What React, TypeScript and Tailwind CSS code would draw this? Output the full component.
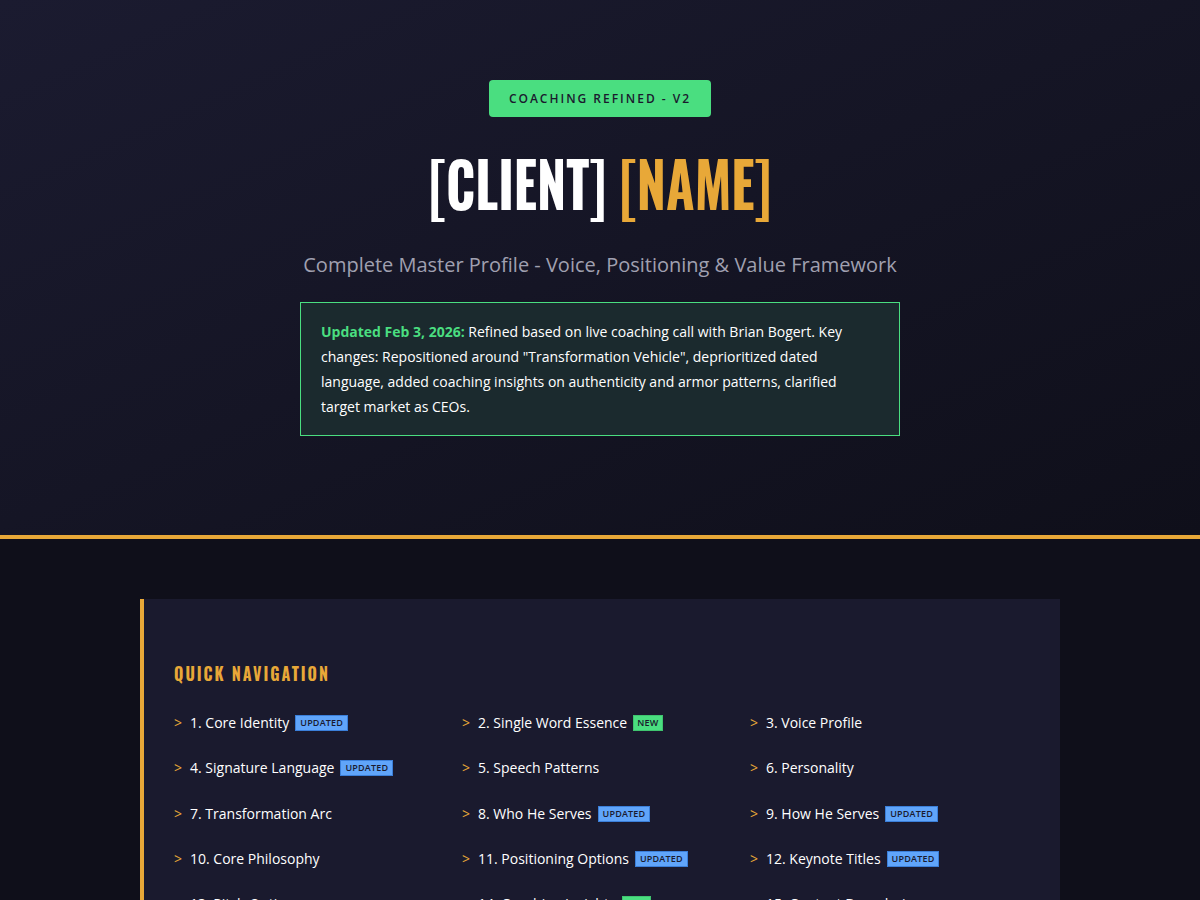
const navItems: { label: string; tag?: 'updated' | 'new' }[] = [
  { label: '1. Core Identity', tag: 'updated' },
  { label: '2. Single Word Essence', tag: 'new' },
  { label: '3. Voice Profile' },
  { label: '4. Signature Language', tag: 'updated' },
  { label: '5. Speech Patterns' },
  { label: '6. Personality' },
  { label: '7. Transformation Arc' },
  { label: '8. Who He Serves', tag: 'updated' },
  { label: '9. How He Serves', tag: 'updated' },
  { label: '10. Core Philosophy' },
  { label: '11. Positioning Options', tag: 'updated' },
  { label: '12. Keynote Titles', tag: 'updated' },
  { label: '13. Pitch Options' },
  { label: '14. Coaching Insights', tag: 'new' },
  { label: '15. Content Boundaries' },
];

const display = "font-['Oswald','Liberation_Sans_Narrow','DejaVu_Sans_Condensed',sans-serif]";

function Tag({ kind }: { kind: 'updated' | 'new' }) {
  if (kind === 'new') {
    return (
      <span className="ml-[6px] inline-block border border-[#3fc46f] bg-[#4ade80] px-[3px] text-[9px] font-semibold uppercase leading-[14px] tracking-[0.3px] text-[#1a1a2e]">
        New
      </span>
    );
  }
  return (
    <span className="ml-[6px] inline-block border border-[#3b7fd9] bg-[#60a5fa] px-[4px] text-[9px] font-semibold uppercase leading-[14px] tracking-[0.2px] text-[#1a1a2e]">
      Updated
    </span>
  );
}

export default function App() {
  return (
    <div className="min-h-[900px] bg-[#0f0f1a] font-['Open_Sans',sans-serif] text-[#e8e8e8]">
      <header className="flex flex-col items-center border-b-4 border-[#e8a838] bg-gradient-to-br from-[#1b1b30] to-[#0f0f1a] pb-[99px] pt-[80px]">
        <div className="rounded-[4px] bg-[#4ade80] px-5 py-[10px] text-[12px] font-semibold uppercase leading-[17px] tracking-[2px] text-[#1a1a2e]">
          Coaching Refined - V2
        </div>
        <h1 className={`${display} mt-[23px] text-[52px] font-bold leading-[84px] text-white`}>
          <span className="inline-block scale-y-[1.2]">
            [CLIENT] <span className="text-[#e8a838]">[NAME]</span>
          </span>
        </h1>
        <p className="mt-[26px] text-[20px] leading-[30px] text-[#a0a0b0]">
          Complete Master Profile - Voice, Positioning &amp; Value Framework
        </p>
        <div className="mt-[22px] w-[600px] border border-[#4ade80] bg-[#1b2a2e] px-5 py-4 text-[14px] leading-[25px] text-white">
          <span className="font-bold text-[#4ade80]">Updated Feb 3, 2026:</span> Refined based on live coaching call with
          Brian Bogert. Key changes: Repositioned around "Transformation Vehicle", deprioritized dated language, added
          coaching insights on authenticity and armor patterns, clarified target market as CEOs.
        </div>
      </header>

      <main className="px-[140px] pt-[60px]">
        <section className="border-l-4 border-[#e8a838] bg-[#1a1a2e] pb-[40px] pl-[30px] pr-[22px] pt-[60px]">
          <h2 className={`${display} text-[16px] font-bold uppercase leading-[28px] tracking-[2px] text-[#e8a838]`}>
            <span className="inline-block scale-y-[1.2]">Quick Navigation</span>
          </h2>
          <div className="mt-[24px] grid grid-cols-3 gap-y-[21.3px]">
            {navItems.map((item) => (
              <div key={item.label} className="flex items-center text-[14px] leading-[24px] text-white">
                <span className="mr-[8px] text-[#e8a838]">&gt;</span>
                <span>{item.label}</span>
                {item.tag ? <Tag kind={item.tag} /> : null}
              </div>
            ))}
          </div>
        </section>
      </main>
    </div>
  );
}
